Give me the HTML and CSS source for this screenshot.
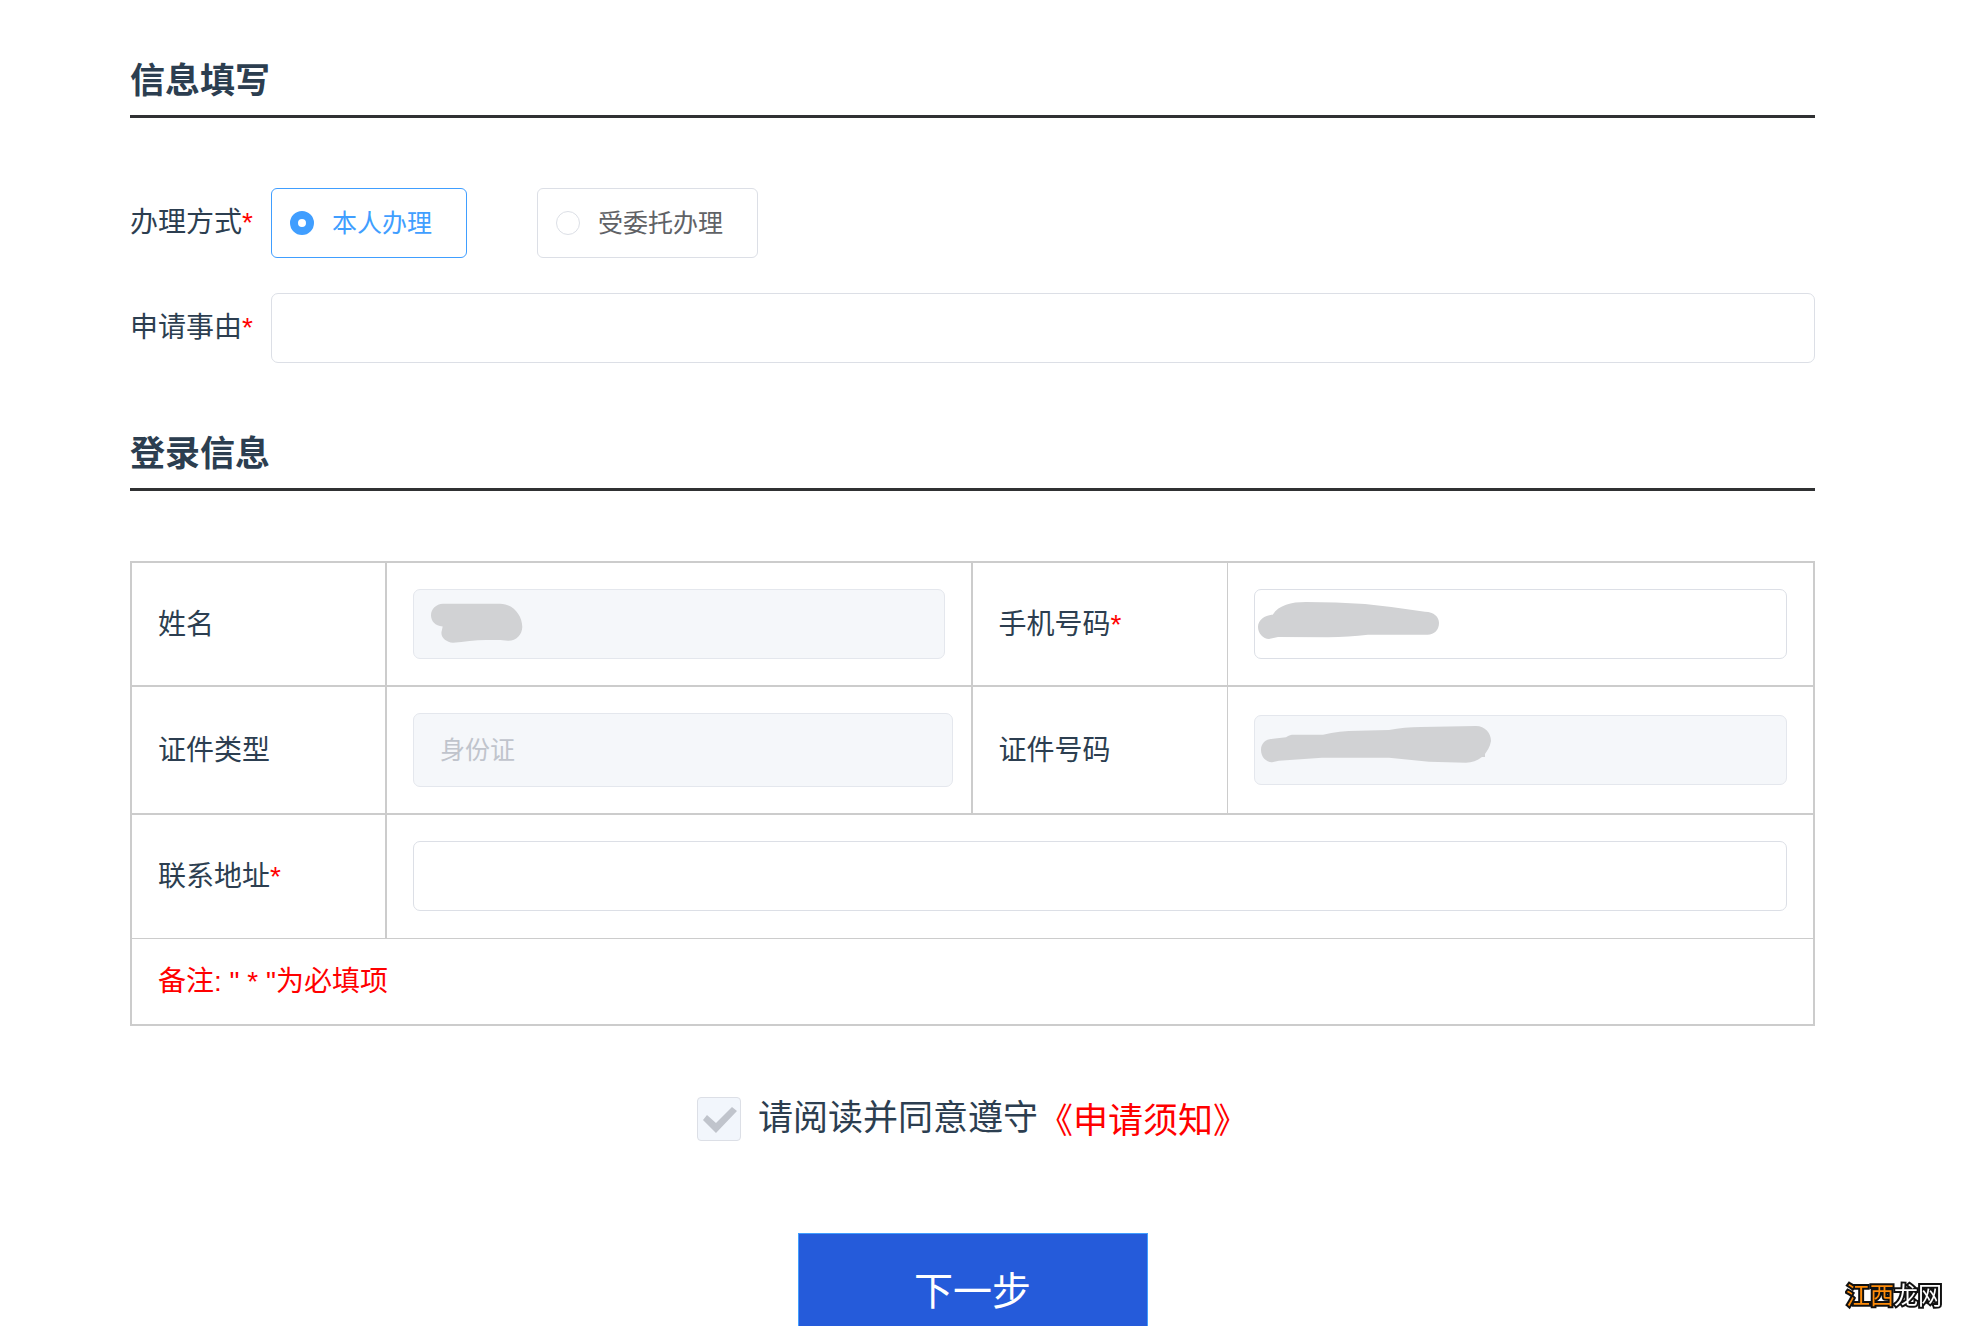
FILE: index.html
```html
<!DOCTYPE html>
<html lang="zh-CN">
<head>
<meta charset="utf-8">
<meta name="viewport" content="width=device-width, initial-scale=1">
<title>信息填写</title>
<link rel="stylesheet" href="styles.css">
</head>
<body>
<form class="page">
  <h2 class="section-title">信息填写</h2>
  <div class="form-rows">
    <div class="form-row" role="radiogroup" aria-labelledby="mode-label">
      <span class="row-label" id="mode-label">办理方式<span class="required">*</span></span>
      <div class="radio-group">
        <label class="radio-box"><input class="radio" type="radio" name="mode" checked>本人办理</label>
        <label class="radio-box"><input class="radio" type="radio" name="mode">受委托办理</label>
      </div>
    </div>
    <div class="form-row">
      <label class="row-label" for="reason">申请事由<span class="required">*</span></label>
      <input class="field" id="reason" type="text">
    </div>
  </div>

  <h2 class="section-title">登录信息</h2>
  <table class="info-table">
    <colgroup><col class="col-label"><col><col class="col-label"><col></colgroup>
    <tbody>
      <tr>
        <th scope="row"><label for="name">姓名</label></th>
        <td>
          <div class="field-wrap">
            <input class="field" id="name" type="text" disabled>
            <svg class="mask" width="250" height="70" viewBox="0 0 250 70" aria-hidden="true"><path d="M30 14.700H87C100 15 109 26 109.300 38C109 46 103 52 95 51.700C88 51 82 51 73 51C62 51 51 53 40 53.700C33 53.500 27 48 28.700 42L29.700 37.500C22 37 18 32 18 26.300C18 20 23 15 30 14.700Z"/></svg>
          </div>
        </td>
        <th scope="row"><label for="phone">手机号码<span class="required">*</span></label></th>
        <td>
          <div class="field-wrap">
            <input class="field" id="phone" type="tel">
            <svg class="mask" width="250" height="70" viewBox="0 0 250 70" aria-hidden="true"><path d="M4 38C4 31 11 26 18.700 25.700C25 16 37 13 52 13Q82 13 111 15Q141 18 171 22.700C180 22.700 185 28 185 34C185 41 180 46 173 45.700H114C101 47 88 48.300 74 48.300L24 48L15 50C9 50 4 44 4 38Z"/></svg>
          </div>
        </td>
      </tr>
      <tr>
        <th scope="row"><label for="id-type">证件类型</label></th>
        <td class="select-cell">
          <select class="field select" id="id-type" disabled><option>身份证</option></select>
        </td>
        <th scope="row"><label for="id-number">证件号码</label></th>
        <td>
          <div class="field-wrap">
            <input class="field" id="id-number" type="text" disabled>
            <svg class="mask" width="250" height="70" viewBox="0 0 250 70" aria-hidden="true"><path d="M7 35C7 28 12 24 19 23.700L32 22.300C35 20 37 19.700 40 19.700H69C80 17 91 16 104 15.700L135 15C145 13 156 12 167 12L222 11C231 11 237 18 237 26C236 32 233 36 231 39V42H228C223 46 218 47.700 212 47.700L175 46.700L135 42.700H68L25 45.700L18 47.300C12 47 7 42 7 35Z"/></svg>
          </div>
        </td>
      </tr>
      <tr class="row-thin">
        <th scope="row"><label for="address">联系地址<span class="required">*</span></label></th>
        <td colspan="3"><input class="field" id="address" type="text"></td>
      </tr>
      <tr>
        <td class="note" colspan="4">备注: " * "为必填项</td>
      </tr>
    </tbody>
  </table>

  <div class="agreement">
    <input class="check" id="agree" type="checkbox" checked disabled>
    <label class="agree-text" for="agree">请阅读并同意遵守</label>
    <a class="notice-link" href="#">《申请须知》</a>
  </div>
  <button class="next" type="button">下一步</button>
</form>
<div class="watermark"><span class="watermark-accent">江西</span>龙网</div>
</body>
</html>
```
FILE: styles.css
```css
* {
  box-sizing: border-box;
}

body {
  margin: 0;
  height: 100vh;
  overflow: hidden;
  background: #fff;
  color: #2c3e50;
  font: 28px/40px "Liberation Sans", "Noto Sans CJK SC", sans-serif;
}

.page {
  display: flex;
  flex-direction: column;
  padding: 58px 164px 0 130px;
}

.section-title {
  margin: 0 0 70px;
  padding-bottom: 11px;
  border-bottom: 3px solid #303133;
  font-size: 35px;
  line-height: 46px;
}

.form-rows {
  display: flex;
  flex-direction: column;
  gap: 35px;
  margin-bottom: 68px;
}

.form-row {
  display: flex;
  align-items: center;
  gap: 18px;
}

.row-label {
  flex: none;
}

.required {
  color: #f00;
}

.radio-group {
  display: flex;
  gap: 70px;
}

.radio-box {
  display: flex;
  align-items: center;
  gap: 18px;
  height: 70px;
  padding: 0 34px 0 18px;
  border: 1px solid #dcdfe6;
  border-radius: 6px;
  color: #606266;
  font-size: 25px;
}

.radio-box:has(:checked) {
  border-color: #409eff;
  color: #409eff;
}

.radio {
  appearance: none;
  width: 24px;
  height: 24px;
  margin: 0;
  border: 1px solid #dcdfe6;
  border-radius: 50%;
  background: #fff;
}

.radio:checked {
  border: 8px solid #409eff;
}

.field {
  display: block;
  width: 100%;
  min-width: 0;
  height: 70px;
  padding: 0 26px;
  border: 1px solid #dcdfe6;
  border-radius: 7px;
  background: #fff;
  color: #606266;
  font: inherit;
  font-size: 25px;
}

.field:disabled {
  border-color: #e4e7ed;
  background: #f5f7fa;
  color: #c0c4cc;
  opacity: 1;
}

.select {
  appearance: none;
  height: 74px;
}

.info-table {
  width: 100%;
  table-layout: fixed;
  border: 2px solid #ccc;
  border-collapse: separate;
  border-spacing: 0;
}

.col-label {
  width: 255px;
}

.info-table th,
.info-table td {
  padding: 26px;
  border: 0 solid #ccc;
  border-width: 0 2px 2px 0;
  font-weight: 400;
  text-align: left;
  vertical-align: middle;
}

.info-table th {
  padding-top: 28px;
}

.info-table th:nth-child(3) {
  border-right-width: 1px;
}

.info-table td:last-child {
  border-right-width: 0;
}

.info-table .row-thin > * {
  padding-bottom: 27px;
  border-bottom-width: 1px;
}

.info-table .select-cell {
  padding-right: 18px;
}

.info-table .note {
  padding: 23px 26px 22px;
  border-bottom-width: 0;
  color: #f00;
}

.field-wrap {
  position: relative;
}

.mask {
  position: absolute;
  top: 0;
  left: 0;
  fill: #d1d2d4;
}

.agreement {
  display: flex;
  align-items: center;
  justify-content: center;
  margin-top: 71px;
  font-size: 35px;
  line-height: 40px;
}

.check {
  appearance: none;
  width: 44px;
  height: 44px;
  margin: 0 17px 0 0;
  border: 1px solid #dcdfe6;
  border-radius: 4px;
  background: #f2f6fc;
}

.check:checked::after {
  content: "";
  display: block;
  width: 42px;
  height: 42px;
  background: #c0c4cc;
  clip-path: polygon(5px 22px, 9px 17px, 18px 25px, 34px 9px, 39px 13px, 18px 35px);
}

.agree-text {
  padding-bottom: 2px;
}

.notice-link {
  padding-top: 4px;
  color: #f00;
  text-decoration: none;
}

.next {
  align-self: center;
  width: 350px;
  height: 118px;
  margin-top: 92px;
  padding: 0;
  border: 1px solid #409eff;
  background: #255bda;
  color: #fff;
  font: inherit;
  font-size: 39px;
}

.watermark {
  position: fixed;
  right: 37px;
  bottom: 15px;
  color: #fff;
  font-size: 24px;
  line-height: 30px;
  -webkit-text-stroke: 4px #111;
  paint-order: stroke fill;
}

.watermark-accent {
  color: #ff8c0a;
}
```
